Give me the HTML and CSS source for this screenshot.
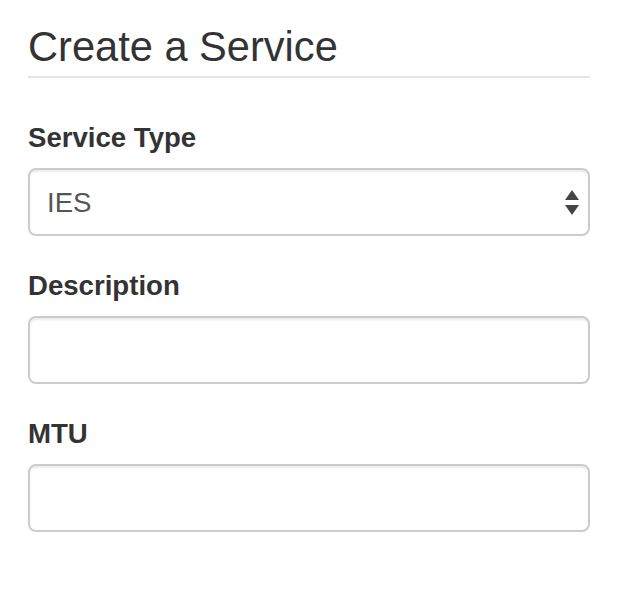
FILE: index.html
```html
<!DOCTYPE html>
<html>
<head>
<meta charset="utf-8">
<link rel="stylesheet" href="styles.css">
</head>
<body>
<form class="form">
  <div class="legend">Create a Service</div>
  <div class="group">
    <label class="label">Service Type</label>
    <div class="select">
      <span class="select-value">IES</span>
      <svg class="arrows" width="14" height="26" viewBox="0 0 14 26">
        <polygon points="7,0 14,10 0,10" fill="#444"/>
        <polygon points="0,15 14,15 7,25" fill="#444"/>
      </svg>
    </div>
  </div>
  <div class="group">
    <label class="label">Description</label>
    <div class="input"></div>
  </div>
  <div class="group">
    <label class="label">MTU</label>
    <div class="input"></div>
  </div>
</form>
</body>
</html>
```

FILE: styles.css
```css
html, body {
  margin: 0;
  padding: 0;
  background: #fff;
}
body {
  font-family: "Liberation Sans", Arial, Helvetica, sans-serif;
  color: #333;
}
.form {
  width: 562px;
  padding: 17px 0 0 28px;
  display: flex;
  flex-direction: column;
}
.legend {
  font-size: 41.6px;
  line-height: 59px;
  border-bottom: 2px solid #e5e5e5;
  margin-bottom: 40px;
  color: #333;
}
.group {
  display: flex;
  flex-direction: column;
  margin-bottom: 30px;
}
.label {
  font-size: 27.6px;
  font-weight: bold;
  line-height: 40px;
  margin-bottom: 10px;
}
.select, .input {
  box-sizing: border-box;
  height: 68px;
  border: 2px solid #ccc;
  border-radius: 8px;
  box-shadow: inset 0 2px 2px rgba(0,0,0,0.075);
  background: #fff;
}
.select {
  display: flex;
  align-items: center;
  justify-content: space-between;
  padding: 2px 9px 0 17px;
}
.select-value {
  font-size: 27.6px;
  color: #555;
}
.arrows {
  display: block;
}
```
